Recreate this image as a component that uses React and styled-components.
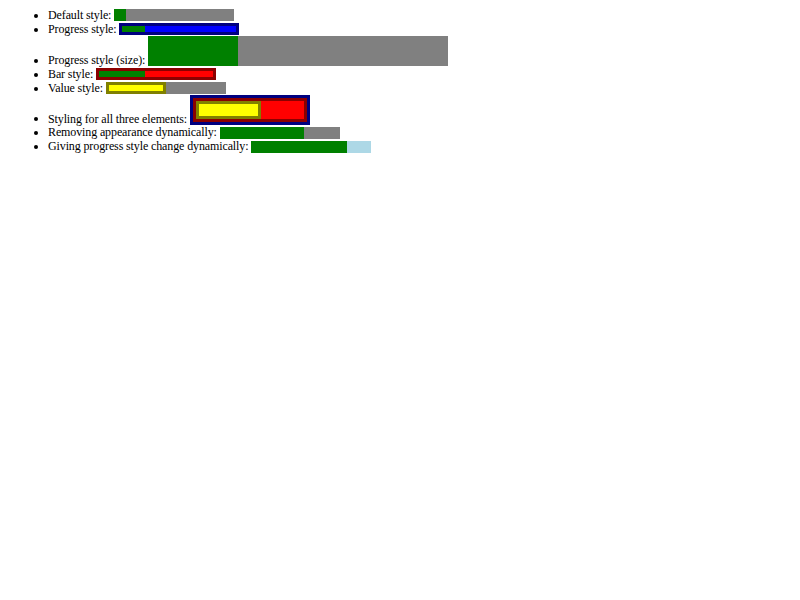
import React from 'react'
import { styled, createGlobalStyle } from 'styled-components'

const GlobalStyle = createGlobalStyle`
body {
  margin: 8px;
  background: #fff;
  font-family: "Liberation Serif", "Times New Roman", serif;
  font-size: 12px;
}
`

const List = styled.ul`
margin: 0;
padding-left: 40px;
list-style: disc;
color: #000;
`

const Item = styled.li`
font-size: 12px;
line-height: 14px;
letter-spacing: -0.12px;
`

// plain progress with the browser look switched off
const Bar = styled.progress`
appearance: none;
-webkit-appearance: none;
box-sizing: border-box;
display: inline-block;
vertical-align: -2.4px;
border: ${p => p.$border ? `3px solid ${p.$border}` : 'none'};
width: ${p => p.$w || 120}px;
height: ${p => p.$h || 12}px;

&::-webkit-progress-bar {
  background-color: ${p => p.$track || 'gray'};
  box-sizing: border-box;
  border: ${p => p.$barBorder ? `3px solid ${p.$barBorder}` : 'none'};
}

&::-webkit-progress-value {
  background-color: ${p => p.$fill || 'green'};
  box-sizing: border-box;
  border: ${p => p.$valueBorder ? `3px solid ${p.$valueBorder}` : 'none'};
}
`

const rows = [
  { label: 'Default style:', value: 10 },
  { label: 'Progress style:', value: 20, $border: 'navy', $track: 'blue' },
  { label: 'Progress style (size):', value: 30, $w: 300, $h: 30 },
  { label: 'Bar style:', value: 40, $barBorder: 'darkred', $track: 'red' },
  { label: 'Value style:', value: 50, $valueBorder: 'olive', $fill: 'yellow' },
  {
    label: 'Styling for all three elements:',
    value: 60,
    $h: 30,
    $border: 'navy',
    $barBorder: 'darkred',
    $track: 'red',
    $valueBorder: 'olive',
    $fill: 'yellow',
  },
  { label: 'Removing appearance dynamically:', value: 70 },
  { label: 'Giving progress style change dynamically:', value: 80, $track: 'lightblue' },
]

const App = () => {
  return (
    <>
      <GlobalStyle />
      <List>
        {rows.map(({ label, value, ...look }) => (
          <Item key={label}>
            {label} <Bar max={100} value={value} {...look} />
          </Item>
        ))}
      </List>
    </>
  )
}

export default App
